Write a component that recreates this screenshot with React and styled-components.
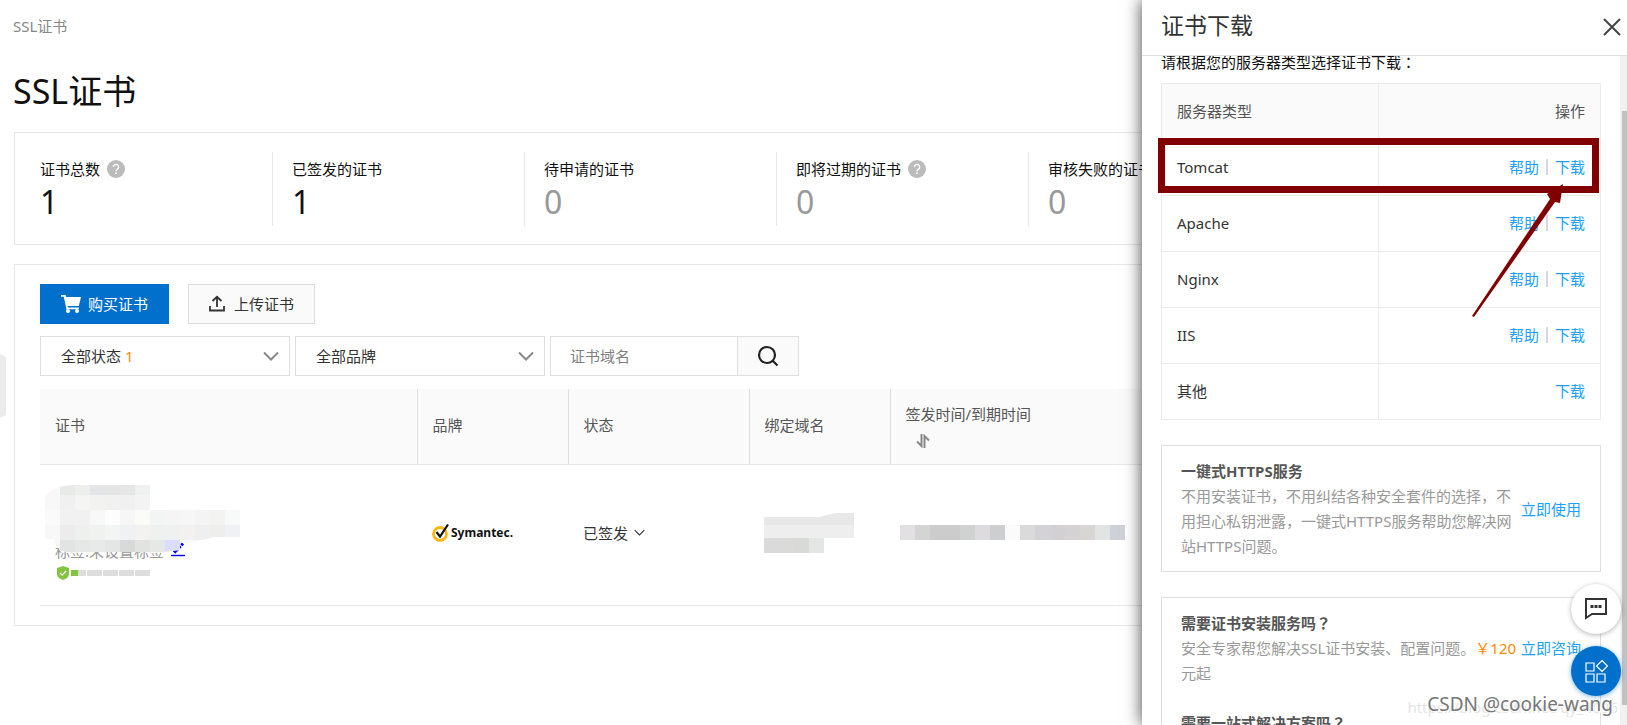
import React from 'react';
import styled, { createGlobalStyle } from 'styled-components';

const GlobalStyle = createGlobalStyle`
  * {
    box-sizing: border-box;
  }
  body {
    margin: 0;
    overflow: hidden;
    background: #fff;
    color: #333;
    font-family: 'Noto Sans', 'Noto Sans CJK SC', sans-serif;
    font-size: 15px;
    font-weight: 400;
    line-height: 24px;
  }
  button,
  input,
  select {
    font: inherit;
    color: inherit;
  }
  a {
    color: #1ba1ff;
    text-decoration: none;
  }
`;

const Page = styled.div`
  position: relative;
  display: flex;
  height: 100vh;
  overflow: hidden;
`;

const Content = styled.main`
  flex: 1;
  min-width: 0;
  padding: 14px 14px 14px 13px;
`;

const Breadcrumb = styled.nav`
  color: #888;
`;

const Title = styled.h1`
  margin: 29px 0 17px;
  color: #111;
  font-size: 34px;
  font-weight: 400;
  line-height: 48px;
`;

const Card = styled.section`
  margin-left: 1px;
  border: 1px solid #e6e8e8;
`;

const Stats = styled(Card)`
  display: flex;
  padding: 19px 6px 18px;
  margin-bottom: 19px;
  overflow: hidden;
`;

const Stat = styled.div`
  flex: 0 0 252px;
  height: 74px;
  padding: 5px 19px;
  border-right: 1px solid #e6e8e8;
`;

const StatLabel = styled.div`
  display: flex;
  align-items: center;
  gap: 7px;
  color: #111;
`;

const StatValue = styled.div`
  color: ${(props) => (props.$muted ? '#999' : '#111')};
  font-size: 32px;
  line-height: 42px;
`;

const Listing = styled(Card)`
  padding: 19px 25px;
`;

const Toolbar = styled.div`
  display: flex;
  gap: 19px;
  margin-bottom: 12px;
`;

const Button = styled.button`
  display: flex;
  align-items: center;
  gap: ${(props) => (props.$primary ? '6px' : '8px')};
  height: 40px;
  padding: 0 20px 0 19px;
  border: 1px solid ${(props) => (props.$primary ? '#0070cc' : '#dedede')};
  background: ${(props) => (props.$primary ? '#0070cc' : '#fafafa')};
  color: ${(props) => (props.$primary ? '#fff' : '#333')};
`;

const Filters = styled.div`
  display: flex;
  gap: 5px;
  margin-bottom: 13px;
`;

const SelectBox = styled.label`
  position: relative;
  display: flex;
  align-items: center;
  width: 250px;
  height: 40px;
  border: 1px solid #dedede;
  svg {
    position: absolute;
    right: 10px;
    pointer-events: none;
  }
`;

const Select = styled.select`
  width: 100%;
  height: 38px;
  padding: 0 20px;
  border: 0;
  background: transparent;
  appearance: none;
`;

const Count = styled.span`
  position: absolute;
  left: 84px;
  color: #ff8a00;
  pointer-events: none;
`;

const Search = styled.form`
  display: flex;
  width: 249px;
  height: 40px;
  border: 1px solid #dedede;
  input {
    flex: 1;
    min-width: 0;
    padding: 0 19px;
    border: 0;
    background: transparent;
  }
  input::placeholder {
    color: #808080;
    opacity: 1;
  }
  button {
    display: flex;
    align-items: center;
    justify-content: center;
    width: 61px;
    padding: 0;
    border: 0;
    border-left: 1px solid #dedede;
    background: #fafafa;
  }
`;

const CertTable = styled.table`
  width: 100%;
  border-collapse: collapse;
  table-layout: fixed;
  th {
    height: 75px;
    padding: 0 15px 3px;
    border-bottom: 1px solid #e6e8e8;
    border-right: 1px solid #dedede;
    background: #fafafa;
    color: #555;
    font-weight: 400;
    text-align: left;
  }
  td {
    height: 141px;
    padding: 0 15px 4px;
    border-bottom: 1px solid #e6e8e8;
  }
  td:first-child {
    padding-bottom: 0;
  }
  th:last-child {
    border-right: 0;
  }
  th svg {
    display: block;
    margin: 8px 0 0 10px;
  }
`;

const CertCell = styled.div`
  position: relative;
  height: 140px;
  padding-top: 74px;
`;

const CertMask = styled.svg`
  position: absolute;
  top: 20px;
  left: -10px;
`;

const TagLine = styled.div`
  display: flex;
  align-items: center;
  gap: 7px;
  color: #999;
`;

const Progress = styled.div`
  display: flex;
  align-items: center;
  gap: 1px;
  height: 20px;
  padding-left: 2px;
  svg {
    margin-right: 1px;
  }
`;

const Segment = styled.span`
  width: 15px;
  height: 6px;
  background: ${(props) =>
    props.$half ? 'linear-gradient(90deg, #84c341 50%, #ddd 50%)' : '#ddd'};
`;

const Brand = styled.div`
  display: flex;
  align-items: center;
  gap: 1px;
  color: #111;
  font-size: 12px;
  font-weight: 700;
`;

const Status = styled.div`
  display: flex;
  align-items: center;
  gap: 6px;
`;

const Masked = styled.svg`
  display: block;
`;

const Handle = styled.svg`
  position: absolute;
  left: 0;
  top: 354px;
`;

const Drawer = styled.aside`
  position: absolute;
  top: 0;
  right: 0;
  bottom: 0;
  display: flex;
  flex-direction: column;
  width: 485px;
  background: #fff;
  box-shadow: 0 0 16px rgba(0, 0, 0, 0.75);
`;

const DrawerHeader = styled.header`
  display: flex;
  flex: none;
  align-items: center;
  justify-content: space-between;
  height: 56px;
  padding: 0 6px 6px 19px;
  border-bottom: 1px solid #dedede;
  h2 {
    margin: 0;
    font-size: 23px;
    font-weight: 400;
    line-height: 32px;
  }
  button {
    display: flex;
    padding: 5px 0 0;
    border: 0;
    background: none;
  }
`;

const DrawerBody = styled.div`
  display: flex;
  flex: 1;
  min-height: 0;
`;

const DrawerContent = styled.div`
  position: relative;
  flex: 1;
  padding: 0 19px;
  overflow: hidden;
`;

const Intro = styled.p`
  margin: -6px 0 9px;
  color: #111;
`;

const ServerTable = styled.table`
  width: 100%;
  margin-bottom: 25px;
  border-collapse: collapse;
  table-layout: fixed;
  th,
  td {
    height: 56px;
    padding: 0 15px 2px;
    border: 1px solid #ebebeb;
    font-weight: 400;
    text-align: left;
  }
  th {
    background: #fafafa;
    color: #555;
  }
  th:last-child,
  td:last-child {
    text-align: right;
  }
`;

const Links = styled.div`
  display: flex;
  align-items: center;
  justify-content: flex-end;
  gap: 7px;
`;

const Divider = styled.span`
  width: 2px;
  height: 16px;
  background: #d9d9d9;
`;

const Promo = styled.section`
  padding: 13px 19px 12px;
  margin-bottom: 25px;
  border: 1px solid #dedede;
`;

const Offer = styled.div`
  display: flex;
  align-items: center;
  justify-content: space-between;
  line-height: 25px;
  & + & {
    margin-top: 25px;
  }
  a {
    flex: none;
  }
`;

const OfferText = styled.div`
  width: 340px;
  color: #999;
  h3 {
    margin: 0;
    color: #555;
    font-size: 15px;
    font-weight: 700;
  }
  p {
    margin: 0;
  }
`;

const Price = styled.span`
  color: #ff8a00;
`;

// full-width marks set in the middle of their cell
const Mark = styled.span`
  font-family: 'Noto Sans CJK JP', sans-serif;
  line-height: 1;
`;

const ScrollTrack = styled.div`
  width: 7px;
  padding: 55px 0 20px 2px;
  background: #f1f1f1;
`;

const ScrollThumb = styled.div`
  height: 100%;
  background: #c1c1c1;
`;

const Frame = styled.div`
  position: absolute;
  top: 82px;
  left: 16px;
  right: 21px;
  height: 55px;
  border: 7px solid #800000;
  pointer-events: none;
`;

const Arrow = styled.svg`
  position: absolute;
  top: 128px;
  right: 55px;
  pointer-events: none;
`;

const Floating = styled.div`
  position: absolute;
  right: 6px;
  bottom: 29px;
  display: flex;
  flex-direction: column;
  gap: 12px;
`;

const RoundButton = styled.button`
  display: flex;
  align-items: center;
  justify-content: center;
  width: 50px;
  height: 50px;
  padding: 0;
  border: 0;
  border-radius: 50%;
  background: ${(props) => (props.$blue ? '#0070cc' : '#fff')};
  box-shadow: 0 1px 5px
    ${(props) => (props.$blue ? 'rgba(0, 112, 204, 0.5)' : 'rgba(0, 0, 0, 0.3)')};
`;

const Watermark = styled.div`
  position: absolute;
  right: 14px;
  bottom: 6px;
  color: #777;
  font-size: 19px;
  line-height: 30px;
  text-shadow: 1px 1px 1px #fff;
`;

const FaintMark = styled(Watermark)`
  right: 9px;
  bottom: 3px;
  color: #e4e4e4;
  font-size: 15px;
`;

const stats = [
  { label: '证书总数', value: 1, help: true },
  { label: '已签发的证书', value: 1 },
  { label: '待申请的证书', value: 0 },
  { label: '即将过期的证书', value: 0, help: true },
  { label: '审核失败的证书', value: 0 },
];

const servers = ['Tomcat', 'Apache', 'Nginx', 'IIS', '其他'];

// 15px mosaic cells: [y, height, x of the first cell, colours]
const certMask = [
  [0, 10, 15, ['#e8eaea', '#eeeeec', '#e4e5e9', '#e5e5e6', '#e6e6e6', '#eff1f1']],
  [10, 15, 0, ['#f8f8f8', '#f0f0f0', '#f5f5f5', '#f2f2f0', '#f1f1f1', '#f0f0f1', '#f3f3f3']],
  [25, 15, 0, ['#fafafa', '#f1f1f1', '#f1f1f1', '#f8f8f8', '#fdfdfd', '#f6f6f6', '#fbfbf8', '#f3f4f4', '#f5f5f5', '#f6f6f6', '#f4f4f4', '#f3f3f1', '#f8fafa']],
  [40, 15, 0, ['#f8f8f8', '#ececec', '#eef0f0', '#f1f1ef', '#f3f4f4', '#eff1f4', '#f4f2f1', '#eff0f0', '#eff0f0', '#f3f1f0', '#efefef', '#eeeeed', '#f0f1f4']],
  [55, 12, 15, ['#e2e3e3', '#e6e8e8', '#e8e9e9', '#e4e6e5', '#d8dada', '#e2e2e1', '#e6e7e7', '#dcdcff', '#f8f8ff']],
];

const dateMask = ['#e2e0e2', '#d5d4d5', '#cccccc', '#cccccd', '#d0d2d1', '#dedbde', '#cdcecf', '#fbfbfb', '#dadada', '#d2d2d7', '#d3d0d3', '#d4d2d3', '#d7d6d2', '#e2e4e3', '#ced1d8'];

const Help = () => (
  <svg width="18" height="18" viewBox="0 0 18 18">
    <circle cx="9" cy="9" r="9" fill="#bbb" />
    <path d="M6.4 7a2.6 2.6 0 1 1 4 2.2c-.9.6-1.4 1-1.4 2" fill="none" stroke="#fff" strokeWidth="1.4" />
    <rect x="8.2" y="12.4" width="1.6" height="1.6" fill="#fff" />
  </svg>
);

const Chevron = ({ size = 16, color = '#888', stroke = 2 }) => (
  <svg width={size} height={size} viewBox="0 0 16 16" fill="none" stroke={color} strokeWidth={stroke}>
    <path d="M1 4.5l7 7 7-7" />
  </svg>
);

function Overview() {
  return (
    <Stats>
      {stats.map((item) => (
        <Stat key={item.label}>
          <StatLabel>
            {item.label}
            {item.help && <Help />}
          </StatLabel>
          <StatValue $muted={item.value === 0}>{item.value}</StatValue>
        </Stat>
      ))}
    </Stats>
  );
}

function Certificates() {
  return (
    <Listing>
      <Toolbar>
        <Button $primary>
          <svg width="22" height="20" viewBox="0 0 22 20" fill="#fff">
            <path d="M1 1h4.6l.7 2H21l-2.2 9H7.6l.4 1.6h10.8v1.6H6.4L3.8 2.8H1z" />
            <circle cx="8" cy="17" r="2" />
            <circle cx="17" cy="17" r="2" />
          </svg>
          购买证书
        </Button>
        <Button>
          <svg width="18" height="18" viewBox="0 0 18 18" fill="none" stroke="#333" strokeWidth="1.8">
            <path d="M9 12V2M4.500 6L9 1.800 13.500 6M2 11v4.500h14V11" />
          </svg>
          上传证书
        </Button>
      </Toolbar>
      <Filters>
        <SelectBox>
          <Select aria-label="全部状态">
            <option>全部状态</option>
          </Select>
          <Count>1</Count>
          <Chevron />
        </SelectBox>
        <SelectBox>
          <Select aria-label="全部品牌">
            <option>全部品牌</option>
          </Select>
          <Chevron />
        </SelectBox>
        <Search onSubmit={(e) => e.preventDefault()}>
          <input type="text" placeholder="证书域名" aria-label="证书域名" />
          <button type="submit" aria-label="搜索">
            <svg width="22" height="22" viewBox="0 0 22 22" fill="none" stroke="#222" strokeWidth="2.2">
              <circle cx="10" cy="10" r="8" />
              <path d="M15.500 15.500l5 5" />
            </svg>
          </button>
        </Search>
      </Filters>
      <CertTable>
        <colgroup>
          <col width="377" />
          <col width="151" />
          <col width="181" />
          <col width="141" />
          <col />
        </colgroup>
        <thead>
          <tr>
            <th>证书</th>
            <th>品牌</th>
            <th>状态</th>
            <th>绑定域名</th>
            <th>
              签发时间/到期时间
              <svg width="14" height="14" viewBox="0 0 14 14" fill="none" stroke="#888" strokeWidth="2">
                <path d="M5.500 0v12L1 7.500M8.500 14V2L13 6.500" />
              </svg>
            </th>
          </tr>
        </thead>
        <tbody>
          <tr>
            <td>
              <CertCell>
                <TagLine>
                  标签:未设置标签
                  <a href="#tag" aria-label="编辑标签">
                    <svg width="14" height="14" viewBox="0 0 14 14" fill="none" stroke="#00f">
                      <path d="M3 9.500L9.500 3" strokeWidth="3.200" />
                      <path d="M10.300 2.200L12 .5" strokeWidth="3" />
                      <path d="M0 12.500h14" strokeWidth="1.400" />
                    </svg>
                  </a>
                </TagLine>
                <Progress>
                  <svg width="12" height="14" viewBox="0 0 12 14">
                    <path d="M6 0l6 2v6c0 3-3 5-6 6-3-1-6-3-6-6V2z" fill="#84c341" />
                    <path d="M3 7l2.200 2.200L9 5" fill="none" stroke="#fff" strokeWidth="1.200" />
                  </svg>
                  <Segment $half />
                  <Segment />
                  <Segment />
                  <Segment />
                  <Segment />
                </Progress>
                <CertMask width="195" height="67">
                  <clipPath id="maskShape">
                    <path d="M0 13Q3 2 28 0H105V25H195V52H168Q155 57 135 58V65L118 67H20Q10 64 9 54H0z" />
                  </clipPath>
                  <g clipPath="url(#maskShape)">
                    <rect width="195" height="67" fill="#f8f8f8" />
                    {certMask.map(([y, h, x0, colors]) =>
                      colors.map((fill, i) => (
                        <rect key={`${y}-${i}`} x={x0 + i * 15} y={y} width="15" height={h} fill={fill} />
                      ))
                    )}
                  </g>
                </CertMask>
              </CertCell>
            </td>
            <td>
              <Brand>
                <svg width="18" height="20" viewBox="0 0 18 20" fill="none">
                  <circle cx="8" cy="11" r="6.500" stroke="#fdb813" strokeWidth="2.800" />
                  <path d="M4.500 9L8 13.500 16 1.500" stroke="#111" strokeWidth="2.200" />
                </svg>
                Symantec.
              </Brand>
            </td>
            <td>
              <Status>
                已签发
                <Chevron size={11} color="#333" stroke={1.6} />
              </Status>
            </td>
            <td>
              <Masked width="90" height="40">
                <path d="M0 4H55L75 -1H90V12H0z" fill="#e8e8e8" />
                <path d="M0 12H90V25H0z" fill="#eeeeee" />
                <path d="M0 25H30V40H0z" fill="#dadada" />
                <path d="M30 25H45V40H30z" fill="#d9d9d7" />
                <path d="M45 25H60V40H45z" fill="#e4e6e5" />
              </Masked>
            </td>
            <td>
              <Masked width="225" height="15" overflow="visible">
                {dateMask.map((fill, i) => (
                  <rect key={i} x={i * 15 - 5} width="15" height="15" fill={fill} />
                ))}
              </Masked>
            </td>
          </tr>
        </tbody>
      </CertTable>
    </Listing>
  );
}

function DownloadDrawer() {
  return (
    <Drawer>
      <DrawerHeader>
        <h2>证书下载</h2>
        <button type="button" aria-label="关闭">
          <svg width="18" height="18" viewBox="0 0 18 18" stroke="#444" strokeWidth="2">
            <path d="M1 1l16 16M17 1L1 17" />
          </svg>
        </button>
      </DrawerHeader>
      <DrawerBody>
        <DrawerContent>
          <Intro>
            请根据您的服务器类型选择证书下载<Mark>：</Mark>
          </Intro>
          <ServerTable>
            <colgroup>
              <col width="217" />
              <col />
            </colgroup>
            <thead>
              <tr>
                <th>服务器类型</th>
                <th>操作</th>
              </tr>
            </thead>
            <tbody>
              {servers.map((name) => (
                <tr key={name}>
                  <td>{name}</td>
                  <td>
                    <Links>
                      {name !== '其他' && (
                        <>
                          <a href="#help">帮助</a>
                          <Divider />
                        </>
                      )}
                      <a href="#download">下载</a>
                    </Links>
                  </td>
                </tr>
              ))}
            </tbody>
          </ServerTable>
          <Promo>
            <Offer>
              <OfferText>
                <h3>一键式HTTPS服务</h3>
                <p>不用安装证书，不用纠结各种安全套件的选择，不用担心私钥泄露，一键式HTTPS服务帮助您解决网站HTTPS问题。</p>
              </OfferText>
              <a href="#use">立即使用</a>
            </Offer>
          </Promo>
          <Promo>
            <Offer>
              <OfferText>
                <h3>
                  需要证书安装服务吗<Mark>？</Mark>
                </h3>
                <p>
                  安全专家帮您解决SSL证书安装、配置问题。<Price>￥120</Price> 元起
                </p>
              </OfferText>
              <a href="#consult">立即咨询</a>
            </Offer>
            <Offer>
              <OfferText>
                <h3>
                  需要一站式解决方案吗<Mark>？</Mark>
                </h3>
              </OfferText>
            </Offer>
          </Promo>
          <Frame />
          <Arrow width="94" height="136" viewBox="0 0 94 136" fill="#800000">
            <path d="M1 132L79 15 76 10 92 0 89 19 84 18 3 133z" />
          </Arrow>
        </DrawerContent>
        <ScrollTrack>
          <ScrollThumb />
        </ScrollTrack>
      </DrawerBody>
    </Drawer>
  );
}

function App() {
  return (
    <Page>
      <GlobalStyle />
      <Handle width="6" height="64" viewBox="0 0 6 64">
        <path d="M0 0l6 3v58l-6 3z" fill="#ebebeb" />
      </Handle>
      <Content>
        <Breadcrumb>SSL证书</Breadcrumb>
        <Title>SSL证书</Title>
        <Overview />
        <Certificates />
      </Content>
      <DownloadDrawer />
      <Floating>
        <RoundButton aria-label="在线咨询">
          <svg width="24" height="24" viewBox="0 0 24 24" fill="none" stroke="#333" strokeWidth="2">
            <path d="M2 2h20v15H8l-6 4z" />
            <path d="M6.500 9.500h3M10.500 9.500h3M14.500 9.500h3" strokeWidth="3" />
          </svg>
        </RoundButton>
        <RoundButton $blue aria-label="应用">
          <svg width="24" height="24" viewBox="0 0 24 24" fill="none" stroke="#fff" strokeWidth="1.200">
            <path d="M2 4h8v8H2zM2 15h8v8H2zM13 15h8v8h-8zM18 1.500l5.500 5.500-5.500 5.500L12.500 7z" />
          </svg>
        </RoundButton>
      </Floating>
      <FaintMark>https://blog.csdn.net/qy_4096</FaintMark>
      <Watermark>CSDN @cookie-wang</Watermark>
    </Page>
  );
}

export default App;
